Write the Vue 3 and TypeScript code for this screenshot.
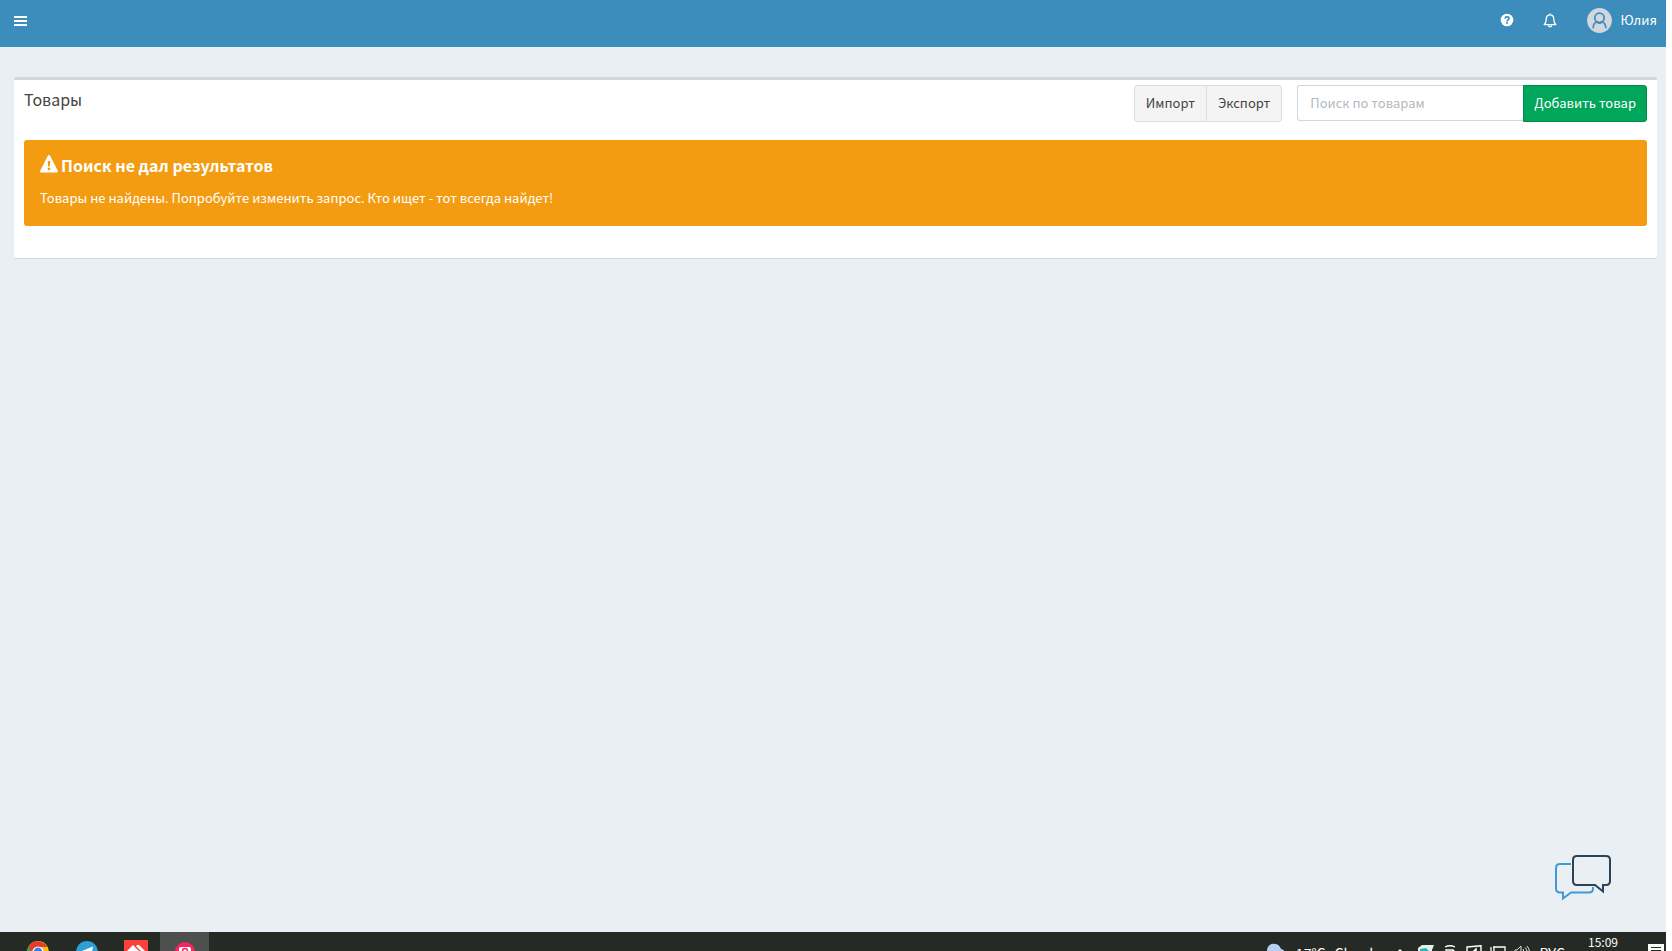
<script setup lang="ts">
import { ref } from 'vue'

const query = ref<string>('')
</script>

<template>
  <div class="screen">
    <header class="navbar">
      <button class="icon-btn" type="button" aria-label="Меню">
        <svg width="13" height="10" viewBox="0 0 13 10"><path d="M0 1h13M0 5h13M0 9h13" stroke="#fff" stroke-width="2" /></svg>
      </button>
      <nav class="nav-right">
        <a href="#" class="nav-link help" aria-label="Помощь">
          <svg width="14" height="14" viewBox="0 0 14 14">
            <circle cx="7" cy="7" r="6.3" fill="#fff" />
            <path d="M5 5.600C5.100 4.500 5.900 3.900 7 3.900c1.200 0 2 .6 2 1.600C9 6.800 7.100 6.700 7.100 8.400" fill="none" stroke="#3c8dbc" stroke-width="1.600" />
            <rect x="6.200" y="9.200" width="1.700" height="1.700" fill="#3c8dbc" />
          </svg>
        </a>
        <a href="#" class="nav-link bell" aria-label="Уведомления">
          <svg width="14" height="15" viewBox="0 0 14 15" fill="none" stroke="#fff" stroke-width="1.300" stroke-linejoin="round">
            <path d="M7 .4v1.400M1.200 11.600C3 10.200 3.200 8 3.200 6.200 3.200 3.500 4.600 1.900 7 1.900s3.800 1.600 3.800 4.300c0 1.800.2 4 2 5.400z" />
            <path d="M5.400 12.200c.1 1.200.7 1.700 1.600 1.700s1.500-.5 1.600-1.700" />
          </svg>
        </a>
        <a href="#" class="user">
          <svg width="25" height="25" viewBox="0 0 25 25">
            <circle cx="12.500" cy="12.500" r="12.400" fill="#d2d6de" />
            <g fill="none" stroke="#3c8dbc" stroke-width="1.700" stroke-linecap="round">
              <circle cx="12.500" cy="9.800" r="4.700" />
              <path d="M6.200 19.600c.2-3.400 2-5.400 4-5.900 1.200 2 3.400 2 4.600 0 2 .5 3.800 2.500 4 5.900" />
            </g>
          </svg>
          <span>Юлия</span>
        </a>
      </nav>
    </header>

    <main class="content">
      <section class="box">
        <div class="box-header">
          <h1>Товары</h1>
          <div class="tools">
            <div class="btn-group">
              <button type="button" class="btn">Импорт</button>
              <button type="button" class="btn">Экспорт</button>
            </div>
            <form class="search" @submit.prevent>
              <input v-model="query" type="text" placeholder="Поиск по товарам" aria-label="Поиск по товарам" />
              <button type="button" class="btn add">Добавить товар</button>
            </form>
          </div>
        </div>
        <div class="alert" role="alert">
          <h2>
            <svg width="18" height="18" viewBox="0 0 18 18">
              <path d="M7.900.7c.5-.8 1.700-.8 2.200 0l7.700 15c.5.9-.1 1.900-1.100 1.900H1.300c-1 0-1.600-1-1.100-1.900z" fill="#fff" />
              <path d="M7.700 6h2.600l-.4 5.600H8.100zM7.800 12.800h2.400V15H7.800z" fill="#f39c12" />
            </svg>
            <span>Поиск не дал результатов</span>
          </h2>
          <p>Товары не найдены. Попробуйте изменить запрос. Кто ищет - тот всегда найдет!</p>
        </div>
      </section>
    </main>

    <button class="chat" type="button" aria-label="Открыть чат">
      <svg width="62" height="50" viewBox="0 0 62 50" fill="none" stroke-width="2">
        <path d="M19 12H8q-4 0-4 4v20.500q0 4 4 4h3v6l8-6h18q4 0 4-4V35" stroke="#3f9bd8" />
        <path d="M25 4h29q4 0 4 4v21q0 4-4 4h-3v6.500L43 33H25q-4 0-4-4V8q0-4 4-4z" stroke="#2c4257" />
      </svg>
    </button>

    <footer class="taskbar">
      <div class="apps">
        <button type="button" class="app" aria-label="Chrome">
          <svg width="24" height="24" viewBox="0 0 24 24">
            <circle cx="12" cy="12" r="11" fill="#fbc116" />
            <path d="M12 12 2.500 6.500A11 11 0 0 0 12 23z" fill="#31a350" />
            <path d="M2.500 6.500a11 11 0 0 1 19 .5H12l-5 8z" fill="#e33b2e" />
            <circle cx="12" cy="12" r="5.600" fill="#fff" />
            <circle cx="12" cy="12" r="4.400" fill="#3b7de8" />
          </svg>
        </button>
        <button type="button" class="app" aria-label="Telegram">
          <svg width="24" height="24" viewBox="0 0 24 24">
            <circle cx="12" cy="12" r="11" fill="#2d9fd9" />
            <path d="M4.500 12 18 6.500 16 18l-4-3-2 2-.5-3.500z" fill="#fff" />
          </svg>
        </button>
        <button type="button" class="app" aria-label="AnyDesk">
          <svg width="24" height="24" viewBox="0 0 24 24">
            <path d="M0 0h24v24H0z" fill="#f9423a" />
            <path d="m9 5 7 7-7 7-7-7zM13 5h2l7 7-7 7-2-1 5-6-6-6z" fill="#fff" />
          </svg>
        </button>
        <button type="button" class="app active" aria-label="Запись экрана">
          <svg width="24" height="24" viewBox="0 0 24 24">
            <circle cx="12" cy="12" r="10" fill="#f5245c" />
            <rect x="6" y="7" width="12" height="10" rx="2" fill="#fff" />
            <circle cx="12" cy="11" r="2.500" fill="none" stroke="#f5245c" stroke-width="1.500" />
          </svg>
        </button>
      </div>
      <div class="tray">
        <div class="weather">
          <svg width="24" height="18" viewBox="0 0 24 18">
            <path d="M5 17a5 5 0 0 1-1-9C4 3 8 0 12 1c3 0 5 2 6 5 4 1 5 4 5 6 0 3-2 5-4 5z" fill="#b5d0f0" />
          </svg>
          <span>17°C</span>
          <span>Cloudy</span>
        </div>
        <div class="status">
          <svg width="16" height="14" viewBox="0 0 16 14"><path d="m2 9 4-4 4 4" fill="none" stroke="#fff" stroke-width="1.500" /></svg>
          <svg width="16" height="14" viewBox="0 0 16 14"><path d="m0 3 4-3h12l-2 5v9H0z" fill="#e6eeee" /><path d="M2 4 8 3l3 3v6H2z" fill="#22b7bd" /></svg>
          <svg width="16" height="14" viewBox="0 0 16 14"><path d="M3 2q5-2.500 10 0M4 5h7v8H4zM11 5l2 2" fill="none" stroke="#fff" stroke-width="1.300" /></svg>
          <svg width="16" height="14" viewBox="0 0 16 14"><path d="M1 2 15 .7V13H1zM5 9l5-5v4H6" fill="none" stroke="#fff" stroke-width="1.400" /></svg>
          <svg width="16" height="14" viewBox="0 0 16 14"><path d="M3 2h12v10H3M1 2v5h3V2M3 7v6" fill="none" stroke="#fff" stroke-width="1.300" /></svg>
          <svg width="16" height="14" viewBox="0 0 16 14"><path d="M1 5h2l4-4v12L3 9H1zM9 4q2 3 0 6M11 2.500q4 4 0 9M13 1q5 6 0 12" fill="none" stroke="#ddd" /></svg>
        </div>
        <span class="lang">РУС</span>
        <time class="clock">15:09</time>
        <svg class="notes" width="16" height="16" viewBox="0 0 16 16"><path d="M0 0h16v13h-4v3l-3-3H0z" fill="#fff" /><path d="M3 3.500h10M3 6.500h10M3 9.500h10" stroke="#252b24" stroke-width="1.200" /></svg>
      </div>
    </footer>
  </div>
</template>

<style>
body {
  background: #fff;
}
</style>

<style scoped>
* {
  box-sizing: border-box;
}
.screen {
  display: flex;
  flex-direction: column;
  height: 100vh;
  margin-right: 6px;
  overflow: hidden;
  position: relative;
  background: #eaeff3;
  color: #444;
  font-family: "Noto Sans CJK SC", "Noto Sans", sans-serif;
  font-size: 13px;
  line-height: 20px;
}
button,
input {
  font: inherit;
  margin: 0;
}
svg {
  display: block;
  flex: none;
}
a {
  color: #fff;
  text-decoration: none;
}
.navbar {
  display: flex;
  justify-content: space-between;
  align-items: flex-start;
  height: 47px;
  flex: none;
  padding: 0 9px 0 14px;
  background: #3c8dbc;
}
.icon-btn {
  padding: 16px 0;
  border: 0;
  background: none;
}
.nav-right {
  display: flex;
  align-items: center;
  height: 40px;
}
.help {
  margin-right: 29px;
}
.bell {
  margin-right: 30px;
}
.user {
  display: flex;
  align-items: center;
  gap: 9px;
}
.content {
  flex: 1;
  padding: 30px 9px 0 14px;
}
.box {
  padding: 5px 10px 32px;
  background: #fff;
  border-top: 3px solid #d2d6de;
  border-bottom: 1px solid #d2d6de;
  border-radius: 3px;
}
.box-header {
  display: flex;
  justify-content: space-between;
  align-items: flex-start;
  margin-bottom: 18px;
}
h1 {
  margin: 4px 0 0;
  font-size: 16px;
  line-height: 20px;
  font-weight: 400;
}
.tools,
.btn-group,
.search {
  display: flex;
}
.tools {
  gap: 15px;
}
.btn {
  height: 37px;
  padding: 0 11px 2px;
  border: 1px solid #ddd;
  background: #f4f4f4;
  color: #444;
  white-space: nowrap;
}
.btn-group .btn:first-child {
  border-radius: 3px 0 0 3px;
}
.btn-group .btn:last-child {
  margin-left: -1px;
  border-radius: 0 3px 3px 0;
}
.search input {
  width: 226px;
  height: 36px;
  padding: 0 12px 2px;
  border: 1px solid #d2d6de;
  border-right: 0;
  border-radius: 3px 0 0 3px;
  background: #fff;
  color: #555;
}
.search input::placeholder {
  color: #b5b8bd;
  opacity: 1;
}
.btn.add {
  padding: 0 10px 2px;
  border-color: #008d4c;
  border-radius: 0 3px 3px 0;
  background: #00a65a;
  color: #fff;
}
.alert {
  padding: 15px 16px 18px;
  border-radius: 3px;
  background: #f39c12;
  color: #fff;
}
h2 {
  display: flex;
  gap: 3px;
  margin: 0 0 13px;
  font-size: 16px;
  line-height: 20px;
  font-weight: 700;
}
.alert p {
  margin: 0;
}
.chat {
  position: absolute;
  right: 52px;
  bottom: 49px;
  padding: 0;
  border: 0;
  background: none;
}
.taskbar {
  display: flex;
  justify-content: space-between;
  height: 19px;
  flex: none;
  overflow: hidden;
  background: #252b24;
  color: #fff;
}
.apps {
  display: flex;
  padding-left: 13px;
}
.app {
  display: flex;
  justify-content: center;
  align-items: flex-start;
  width: 49px;
  height: 40px;
  padding: 8px 0 0;
  border: 0;
  background: none;
}
.app.active {
  background: #4d504e;
}
.tray {
  display: flex;
  align-items: flex-start;
  padding-right: 2px;
  font-size: 14px;
}
.weather,
.status {
  display: flex;
  padding-top: 11px;
}
.weather {
  gap: 9px;
  margin-right: 14px;
}
.status {
  gap: 8px;
  padding-top: 13px;
  margin-right: 9px;
}
.lang {
  padding-top: 11px;
  margin-right: 23px;
}
.clock {
  margin-right: 30px;
  font-size: 12px;
}
.notes {
  margin-top: 12px;
}
</style>
